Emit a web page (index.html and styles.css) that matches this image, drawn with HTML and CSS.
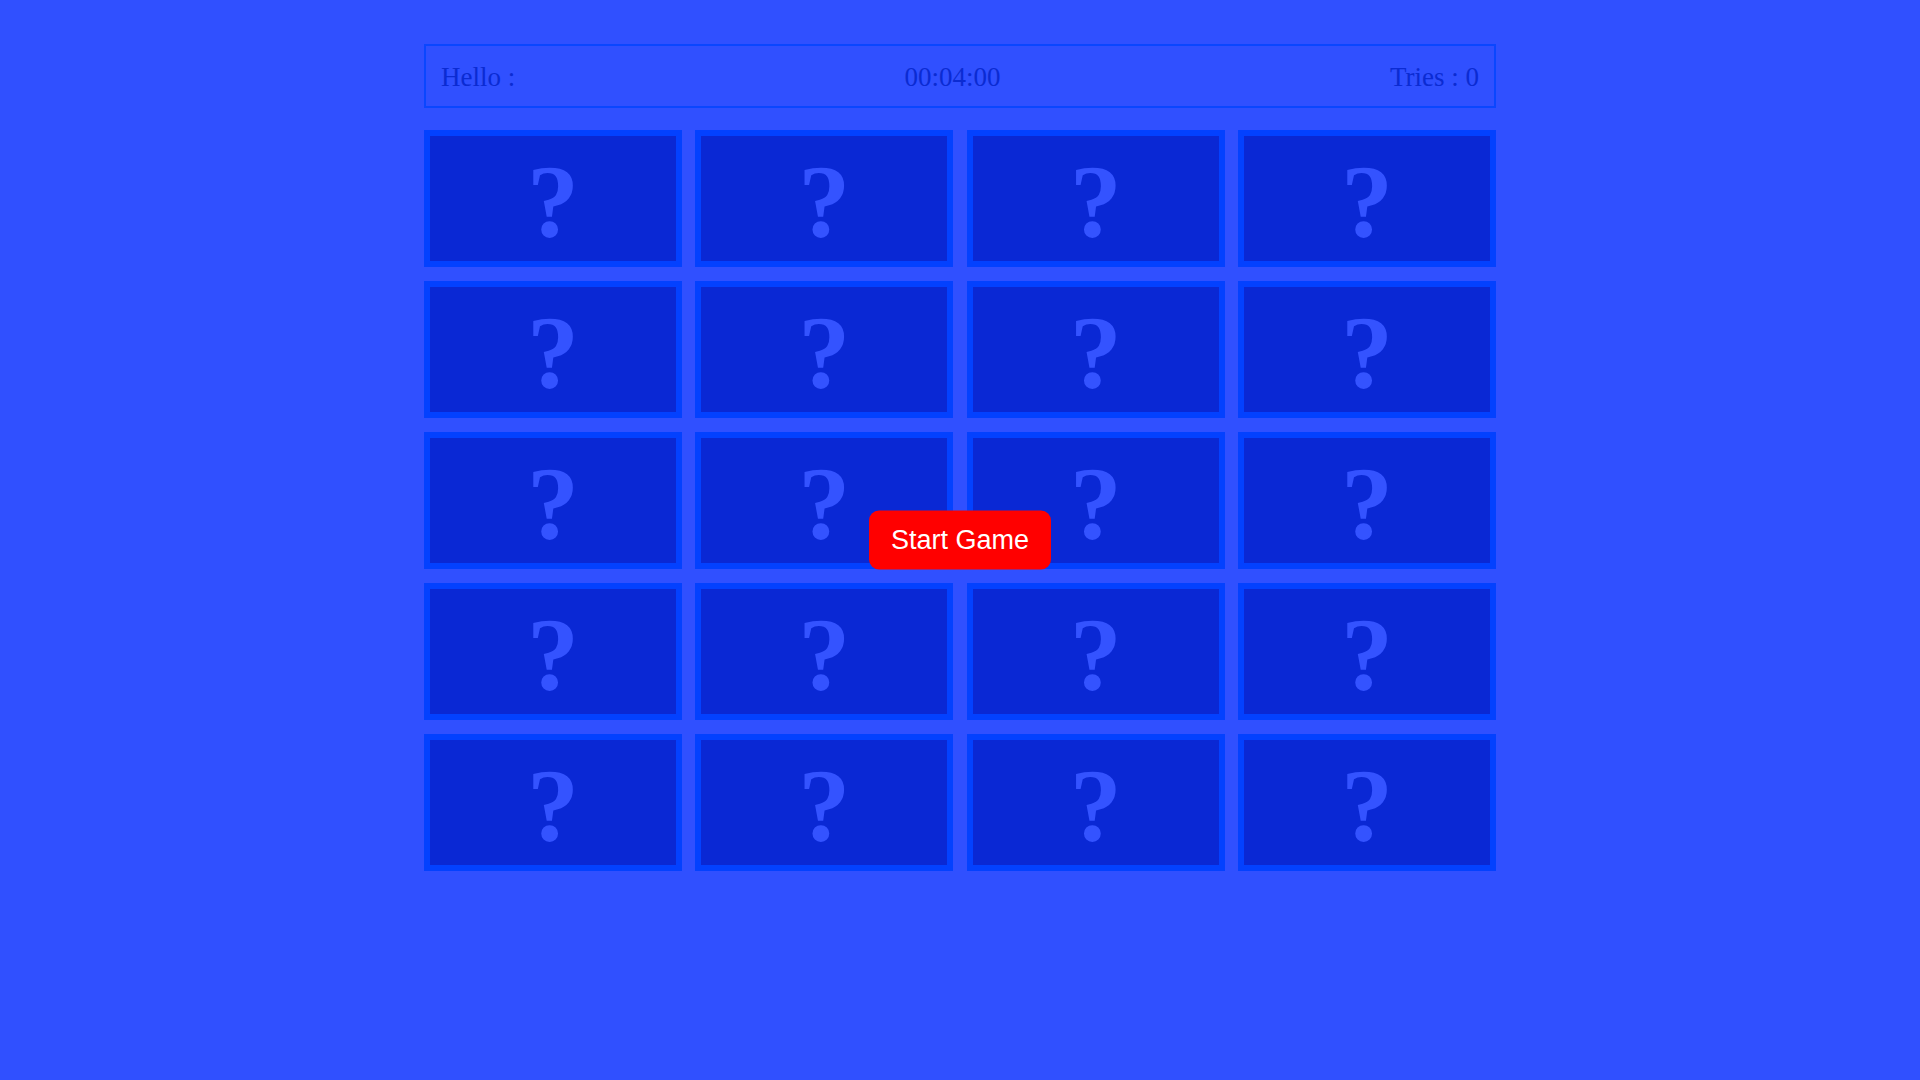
FILE: index.html
```html
<!DOCTYPE html>
<html lang="en">
<head>
<meta charset="utf-8">
<title>Memory Game</title>
<link rel="stylesheet" href="styles.css">
</head>
<body>
<div class="game">
  <div class="info">
    <span class="name">Hello :</span>
    <span class="timer">00:04:00</span>
    <span class="tries">Tries : 0</span>
  </div>
  <div class="board">
    <div class="card"><span>?</span></div>
    <div class="card"><span>?</span></div>
    <div class="card"><span>?</span></div>
    <div class="card"><span>?</span></div>
    <div class="card"><span>?</span></div>
    <div class="card"><span>?</span></div>
    <div class="card"><span>?</span></div>
    <div class="card"><span>?</span></div>
    <div class="card"><span>?</span></div>
    <div class="card"><span>?</span></div>
    <div class="card"><span>?</span></div>
    <div class="card"><span>?</span></div>
    <div class="card"><span>?</span></div>
    <div class="card"><span>?</span></div>
    <div class="card"><span>?</span></div>
    <div class="card"><span>?</span></div>
    <div class="card"><span>?</span></div>
    <div class="card"><span>?</span></div>
    <div class="card"><span>?</span></div>
    <div class="card"><span>?</span></div>
  </div>
</div>
<button class="start">Start Game</button>
</body>
</html>
```
FILE: styles.css
```css
html, body {
  margin: 0;
  padding: 0;
  background: #3050ff;
  height: 100%;
}
body {
  font-family: "Liberation Serif", "Times New Roman", serif;
}
.game {
  width: 1072px;
  margin: 44px auto 0;
}
.info {
  box-sizing: border-box;
  height: 64px;
  border: 2px solid #0a46ff;
  padding: 16px 15px 13px;
  display: flex;
  justify-content: space-between;
  align-items: flex-start;
  font-size: 27px;
  color: #0b2bd2;
}
.board {
  margin-top: 22px;
  display: flex;
  flex-wrap: wrap;
  justify-content: space-between;
  row-gap: 14px;
}
.card {
  box-sizing: border-box;
  width: 258px;
  height: 137px;
  border: 6px solid #0341ff;
  background: #0a28d4;
  display: flex;
  align-items: center;
  justify-content: center;
}
.card span {
  font-family: "Liberation Serif", "Times New Roman", serif;
  font-weight: bold;
  font-size: 104px;
  line-height: 1;
  color: #3453ff;
  margin-top: 6px;
}
.start {
  position: fixed;
  left: 50%;
  top: 50%;
  transform: translate(-50%, -50%);
  width: 182px;
  height: 59px;
  border: none;
  border-radius: 10px;
  background: #ff0000;
  color: #ffffff;
  font-family: "Liberation Sans", Arial, sans-serif;
  font-size: 27px;
  padding: 0;
  cursor: pointer;
}
```
